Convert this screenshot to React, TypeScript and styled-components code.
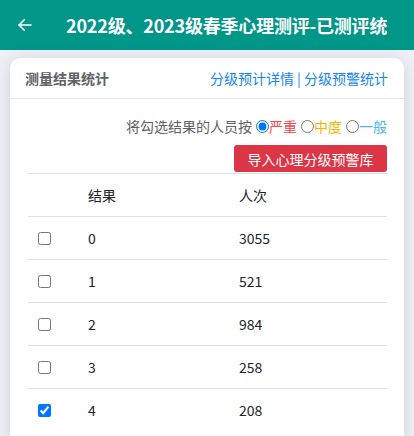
import React, { useState } from "react";
import styled, { createGlobalStyle } from "styled-components";

const GlobalStyle = createGlobalStyle`
  body {
    margin: 0;
    background: #eef0f5;
    font-family: "Noto Sans CJK SC", "Noto Sans", sans-serif;
    color: #212529;
  }
`;

const Header = styled.div`
  height: 50px;
  background: #009688;
  display: flex;
  align-items: center;
  padding-left: 16px;
  color: #fff;
`;

const BackBtn = styled.div`
  width: 18px;
  height: 18px;
  display: flex;
  align-items: center;
  justify-content: center;
`;

const Title = styled.div`
  margin-left: 32px;
  font-size: 18px;
  font-weight: bold;
  letter-spacing: -0.2px;
  white-space: nowrap;
  overflow: hidden;
`;

const Card = styled.div`
  margin: 8px 10px 0;
  background: #fff;
  border-radius: 10px;
  box-shadow: 0 2px 14px rgba(90, 100, 140, 0.22);
  padding-bottom: 20px;
`;

const CardHead = styled.div`
  height: 40px;
  padding: 0 16px 0 15px;
  display: flex;
  align-items: center;
  justify-content: space-between;
  border-bottom: 1px solid #e6e8eb;
  font-size: 14px;
`;

const CardTitle = styled.div`
  color: #5f6266;
  font-weight: bold;
`;

const Links = styled.div`
  color: #1485f5;
  a {
    color: inherit;
    text-decoration: none;
  }
`;

const CardBody = styled.div`
  padding: 0 17px 0 18px;
`;

const FilterRow = styled.div`
  margin-top: 17px;
  display: flex;
  justify-content: flex-end;
  align-items: center;
  font-size: 14px;
  line-height: 20px;
  color: #606266;
`;

const RadioLabel = styled.label<{ tone: string }>`
  display: flex;
  align-items: center;
  color: ${(p) => p.tone};
  input {
    margin: 0 0 0 4px;
    width: 13px;
    height: 13px;
  }
`;

const ButtonRow = styled.div`
  margin-top: 9px;
  display: flex;
  justify-content: flex-end;
`;

const ImportButton = styled.button`
  height: 27px;
  width: 153px;
  border: none;
  border-radius: 3px;
  background: #dc3545;
  color: #fff;
  font-family: inherit;
  font-size: 14px;
  padding: 0;
  cursor: pointer;
`;

const Table = styled.table`
  width: 100%;
  border-collapse: collapse;
  margin-top: 1px;
  font-size: 14px;
  table-layout: fixed;
`;

const Cell = styled.td<{ w?: number }>`
  height: 42px;
  padding: 0 10px;
  border-top: 1px solid #dee2e6;
  vertical-align: middle;
  width: ${(p) => (p.w ? `${p.w}px` : "auto")};
  input {
    margin: 0;
    width: 13px;
    height: 13px;
    display: block;
  }
`;

const HeadCell = styled(Cell).attrs({ as: "th" })`
  font-weight: normal;
  text-align: left;
`;

const rows = [
  { result: "0", count: "3055", checked: false },
  { result: "1", count: "521", checked: false },
  { result: "2", count: "984", checked: false },
  { result: "3", count: "258", checked: false },
  { result: "4", count: "208", checked: true },
];

const levels = [
  { key: "severe", label: "严重", tone: "#f5484d" },
  { key: "mid", label: "中度", tone: "#f8b500" },
  { key: "normal", label: "一般", tone: "#4fb8ea" },
];

const App = () => {
  const [level, setLevel] = useState("severe");
  const [checked, setChecked] = useState(rows.map((r) => r.checked));

  return (
    <>
      <GlobalStyle />
      <Header>
        <BackBtn>
          <svg width="18" height="18" viewBox="0 0 24 24" fill="none" stroke="#fff" strokeWidth="2.2" strokeLinecap="round" strokeLinejoin="round">
            <path d="M20 12H4" />
            <path d="M11 5l-7 7 7 7" />
          </svg>
        </BackBtn>
        <Title>2022级、2023级春季心理测评-已测评统</Title>
      </Header>
      <Card>
        <CardHead>
          <CardTitle>测量结果统计</CardTitle>
          <Links>
            <a href="#">分级预计详情</a> | <a href="#">分级预警统计</a>
          </Links>
        </CardHead>
        <CardBody>
          <FilterRow>
            <span>将勾选结果的人员按</span>
            {levels.map((l) => (
              <RadioLabel key={l.key} tone={l.tone}>
                <input
                  type="radio"
                  name="level"
                  checked={level === l.key}
                  onChange={() => setLevel(l.key)}
                />
                {l.label}
              </RadioLabel>
            ))}
          </FilterRow>
          <ButtonRow>
            <ImportButton>导入心理分级预警库</ImportButton>
          </ButtonRow>
          <Table>
            <thead>
              <tr>
                <HeadCell w={30}></HeadCell>
                <HeadCell w={131}>结果</HeadCell>
                <HeadCell>人次</HeadCell>
              </tr>
            </thead>
            <tbody>
              {rows.map((r, i) => (
                <tr key={r.result}>
                  <Cell>
                    <input
                      type="checkbox"
                      checked={checked[i]}
                      onChange={() =>
                        setChecked(checked.map((c, j) => (j === i ? !c : c)))
                      }
                    />
                  </Cell>
                  <Cell>{r.result}</Cell>
                  <Cell>{r.count}</Cell>
                </tr>
              ))}
            </tbody>
          </Table>
        </CardBody>
      </Card>
    </>
  );
};

export default App;
